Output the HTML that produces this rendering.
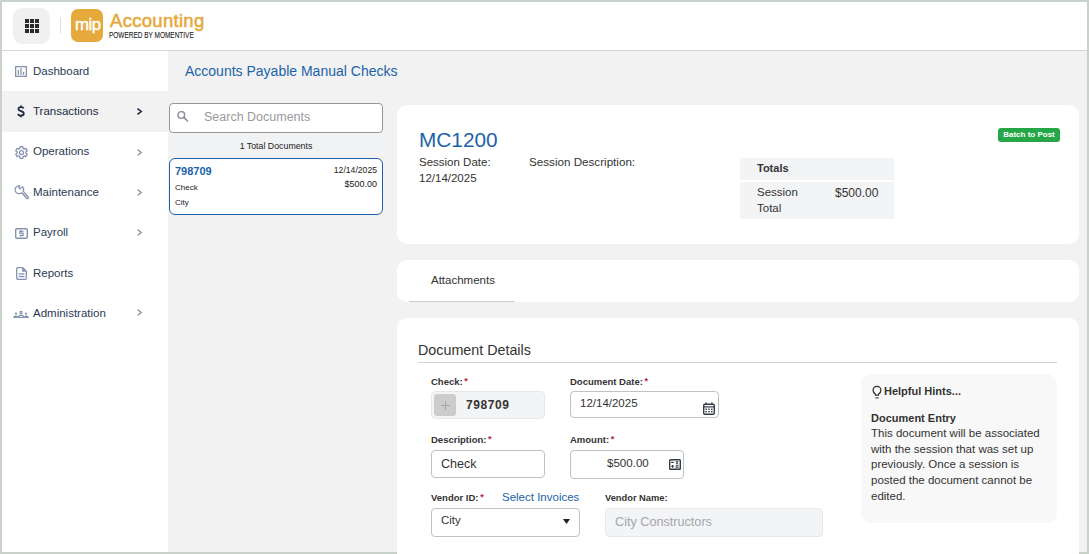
<!DOCTYPE html>
<html><head><meta charset="utf-8">
<style>
*{box-sizing:border-box;margin:0;padding:0}
html,body{width:1089px;height:554px;overflow:hidden;background:#c9d1cb;font-family:"Liberation Sans",sans-serif;position:relative}
.a{position:absolute;white-space:nowrap;line-height:1}
#main{position:absolute;left:2px;top:2px;width:1085px;height:550px;background:#f2f2f2}
#header{position:absolute;left:2px;top:2px;width:1085px;height:49px;background:#fff;border-bottom:1px solid #d6d6d6}
#side{position:absolute;left:2px;top:51px;width:166px;height:501px;background:#fff}
.nav{font-size:11.5px;color:#2b3a55;left:33px}
.chev{position:absolute;width:7px;height:7px}
.card{position:absolute;background:#fff;border-radius:10px}
.lbl{position:absolute;font-size:9.5px;font-weight:bold;color:#333;white-space:nowrap;line-height:1}
.lbl b{color:#b02a3a;font-weight:bold;position:relative;top:-1px;margin-left:-1px;font-size:9px}
.inp{position:absolute;border:1px solid #c2c2c2;border-radius:4px;background:#fff}
.txt{color:#333}
</style></head><body>
<div id="main"></div>
<div id="header"></div>
<div id="side"></div>

<!-- header -->
<div class="a" style="left:13px;top:8px;width:37px;height:36px;border-radius:9px;background:#f0f0f0"></div>
<svg class="a" style="left:25px;top:19px" width="14" height="14" viewBox="0 0 14 14" fill="#2b2b2b">
  <rect x="0" y="0" width="4" height="4"/><rect x="5" y="0" width="4" height="4"/><rect x="10" y="0" width="4" height="4"/>
  <rect x="0" y="5" width="4" height="4"/><rect x="5" y="5" width="4" height="4"/><rect x="10" y="5" width="4" height="4"/>
  <rect x="0" y="10" width="4" height="4"/><rect x="5" y="10" width="4" height="4"/><rect x="10" y="10" width="4" height="4"/>
</svg>
<div class="a" style="left:60px;top:17px;width:1px;height:17px;background:#dfe0e6"></div>
<div class="a" style="left:71px;top:9px;width:32px;height:33px;border-radius:7px;background:#e6a93b"></div>
<div class="a" style="left:75px;top:17px;color:#fff;font-size:16.8px;letter-spacing:-0.5px;-webkit-text-stroke:0.45px #fff">mip</div>
<div class="a" style="left:110px;top:12px;color:#e6a93b;font-size:18.5px;letter-spacing:0.3px;-webkit-text-stroke:0.55px #e6a93b">Accounting</div>
<div class="a" style="left:109px;top:32px;color:#222;font-size:8.2px;transform:scaleX(0.79);transform-origin:0 0;-webkit-text-stroke:0.1px #222">POWERED BY MOMENTIVE</div>

<!-- sidebar -->
<div class="a" style="left:2px;top:91px;width:166px;height:41px;background:#f2f2f2"></div>
<svg class="a" style="left:15px;top:66px" width="12" height="11" viewBox="0 0 12 11"><rect x="0.65" y="0.65" width="10.7" height="9.7" fill="none" stroke="#8591b0" stroke-width="1.3"/><rect x="2.7" y="3.9" width="1.3" height="5" fill="#8591b0"/><rect x="5.3" y="2.1" width="1.3" height="6.8" fill="#8591b0"/><rect x="7.9" y="5.9" width="1.3" height="3" fill="#8591b0"/></svg>
<div class="a nav" style="top:66px">Dashboard</div>

<svg class="a" style="left:17px;top:105px" width="8" height="13" viewBox="0 0 8 13"><path d="M6.6 3.6C6.3 2.6 5.4 2.1 4 2.1C2.5 2.1 1.4 2.8 1.4 4C1.4 5.1 2.4 5.6 4 6.1C5.7 6.6 6.8 7.2 6.8 8.6C6.8 9.9 5.6 10.6 4 10.6C2.4 10.6 1.3 10 1.1 8.8M4 0.4V2.1M4 10.6V12.2" fill="none" stroke="#1d2a44" stroke-width="1.8"/></svg>
<div class="a nav" style="top:106px;color:#1d2a44">Transactions</div>
<svg class="a chev" style="left:136px;top:108px" width="7" height="8" viewBox="0 0 7 8"><path d="M1.2 0.7L5.5 4L1.2 7.3" fill="none" stroke="#1d2a44" stroke-width="1.8"/></svg>

<svg class="a" style="left:15px;top:146px" width="13" height="13" viewBox="0 0 13 13"><path fill="none" stroke="#8591b0" stroke-width="1.25" stroke-linejoin="round" d="M4.89 2.51 L5.05 0.68 L7.95 0.68 L8.11 2.51 L9.15 3.11 L10.82 2.33 L12.27 4.85 L10.76 5.90 L10.76 7.10 L12.27 8.15 L10.82 10.67 L9.15 9.89 L8.11 10.49 L7.95 12.32 L5.05 12.32 L4.89 10.49 L3.85 9.89 L2.18 10.67 L0.73 8.15 L2.24 7.10 L2.24 5.90 L0.73 4.85 L2.18 2.33 L3.85 3.11Z"/><circle cx="6.5" cy="6.5" r="2" fill="none" stroke="#8591b0" stroke-width="1.25"/></svg>
<div class="a nav" style="top:146px">Operations</div>
<svg class="a chev" style="left:136px;top:149px" width="7" height="8" viewBox="0 0 7 8"><path d="M1.3 0.7L5.5 4L1.3 7.3" fill="none" stroke="#7d889c" stroke-width="1.4"/></svg>

<svg class="a" style="left:14px;top:185px" width="15" height="15" viewBox="0 0 15 15"><g fill="none" stroke="#8591b0" stroke-width="1.25" stroke-linejoin="round"><path d="M5.6 0.9A3.9 3.9 0 1 0 7.6 7.6L12.6 13.3A1.1 1.1 0 0 0 14.2 11.8L9.2 6.1A3.9 3.9 0 0 0 8.4 1.6L6.2 3.9L4.8 2.8Z"/><path d="M8.7 8L13 12.4" stroke-width="0.8"/></g></svg>
<div class="a nav" style="top:187px">Maintenance</div>
<svg class="a chev" style="left:136px;top:189px" width="7" height="8" viewBox="0 0 7 8"><path d="M1.3 0.7L5.5 4L1.3 7.3" fill="none" stroke="#7d889c" stroke-width="1.4"/></svg>

<svg class="a" style="left:15px;top:228px" width="13" height="11" viewBox="0 0 13 11"><rect x="0.7" y="0.7" width="11.6" height="9.6" rx="1.2" fill="none" stroke="#8591b0" stroke-width="1.4"/><path d="M8.4 3.3H4.7V5.2H8.1V7.4H4.5M5.9 2.1V3.3M5.9 7.4V8.8" fill="none" stroke="#8591b0" stroke-width="1.2"/></svg>
<div class="a nav" style="top:227px">Payroll</div>
<svg class="a chev" style="left:136px;top:229px" width="7" height="8" viewBox="0 0 7 8"><path d="M1.3 0.7L5.5 4L1.3 7.3" fill="none" stroke="#7d889c" stroke-width="1.4"/></svg>

<svg class="a" style="left:16px;top:267px" width="11" height="13" viewBox="0 0 11 13"><path d="M1.9 0.7H6.8L10.3 4.2V11.1A1.2 1.2 0 0 1 9.1 12.3H1.9A1.2 1.2 0 0 1 0.7 11.1V1.9A1.2 1.2 0 0 1 1.9 0.7Z" fill="none" stroke="#8591b0" stroke-width="1.3"/><path d="M6.2 0.7L10.3 4.8H6.2Z" fill="#8591b0"/><rect x="2.6" y="6.3" width="5.8" height="1.3" fill="#8591b0"/><rect x="2.6" y="8.9" width="5.8" height="1.3" fill="#8591b0"/></svg>
<div class="a nav" style="top:268px">Reports</div>

<svg class="a" style="left:13px;top:311px" width="16" height="7" viewBox="0 0 16 7"><g fill="none" stroke="#8591b0" stroke-width="1.1"><circle cx="8" cy="1.5" r="1.1"/><path d="M5.3 6.4C5.4 4.8 6.5 4.1 8 4.1C9.5 4.1 10.6 4.8 10.7 6.4Z"/></g><g fill="#8591b0"><circle cx="3" cy="2.6" r="1.1"/><circle cx="13" cy="2.6" r="1.1"/><path d="M0.2 7C0.3 5.2 1.4 4.6 3 4.6C3.8 4.6 4.3 4.8 4.6 5L4.6 7Z"/><path d="M15.8 7C15.7 5.2 14.6 4.6 13 4.6C12.2 4.6 11.7 4.8 11.4 5L11.4 7Z"/><rect x="4.5" y="6" width="7" height="1"/></g></svg>
<div class="a nav" style="top:308px">Administration</div>
<svg class="a chev" style="left:136px;top:309px" width="7" height="8" viewBox="0 0 7 8"><path d="M1.3 0.7L5.5 4L1.3 7.3" fill="none" stroke="#7d889c" stroke-width="1.4"/></svg>

<!-- page title & doc list -->
<div class="a" style="left:185px;top:64px;font-size:14px;color:#1b63a8">Accounts Payable Manual Checks</div>

<div class="a" style="left:169px;top:103px;width:214px;height:30px;border:1px solid #94979c;border-radius:4px;background:#fff"></div>
<svg class="a" style="left:177px;top:111px" width="12" height="11" viewBox="0 0 12 11"><circle cx="4.3" cy="3.9" r="3.3" fill="none" stroke="#8c9098" stroke-width="1.5"/><path d="M6.8 6.4L10.5 10" stroke="#8c9098" stroke-width="1.7" stroke-linecap="round"/></svg>
<div class="a" style="left:204px;top:111px;font-size:12.5px;color:#9b9b9b">Search Documents</div>

<div class="a" style="left:168px;top:133px;width:215px;height:21px;background:#f1f2f4;border-radius:4px"></div>
<div class="a" style="left:168.5px;top:142px;width:215px;text-align:center;font-size:8.8px;color:#222">1 Total Documents</div>

<div class="a" style="left:169px;top:158px;width:214px;height:57px;border:1.4px solid #1c5fab;border-radius:6px;background:#fff"></div>
<div class="a" style="left:175px;top:166px;font-size:11px;font-weight:bold;color:#1b63a8">798709</div>
<div class="a" style="left:300px;width:77px;text-align:right;top:166px;font-size:8.65px;color:#222">12/14/2025</div>
<div class="a" style="left:300px;width:77px;text-align:right;top:180px;font-size:9px;color:#222">$500.00</div>
<div class="a" style="left:175px;top:184px;font-size:8px;color:#222">Check</div>
<div class="a" style="left:175px;top:199px;font-size:8px;color:#222">City</div>

<!-- top card -->
<div class="card" style="left:397px;top:105px;width:682px;height:139px"></div>
<div class="a" style="left:419px;top:130px;font-size:20.8px;color:#1b63a8">MC1200</div>
<div class="a txt" style="left:419px;top:157px;font-size:11.5px">Session Date:</div>
<div class="a txt" style="left:419px;top:173px;font-size:11.5px">12/14/2025</div>
<div class="a txt" style="left:529px;top:156px;font-size:11.65px">Session Description:</div>
<div class="a" style="left:740px;top:158px;width:154px;height:22px;background:#f3f4f6"></div>
<div class="a" style="left:740px;top:182px;width:154px;height:37px;background:#f3f4f6"></div>
<div class="a txt" style="left:757px;top:163px;font-size:11px;font-weight:bold">Totals</div>
<div class="a txt" style="left:757px;top:187px;font-size:11.5px">Session</div>
<div class="a txt" style="left:757px;top:203px;font-size:11.5px">Total</div>
<div class="a txt" style="left:835px;top:187px;font-size:12px">$500.00</div>
<div class="a" style="left:998px;top:128px;width:62px;height:14px;border-radius:3px;background:#25a748"></div>
<div class="a" style="left:998px;top:131px;width:62px;text-align:center;color:#fff;font-size:8px;font-weight:bold">Batch to Post</div>

<!-- attachments card -->
<div class="card" style="left:397px;top:260px;width:682px;height:42px"></div>
<div class="a txt" style="left:431px;top:275px;font-size:11.5px">Attachments</div>
<div class="a" style="left:409px;top:301px;width:106px;height:1px;background:#c9ccd2"></div>

<!-- details card -->
<div class="card" style="left:397px;top:318px;width:682px;height:260px"></div>
<div class="a txt" style="left:418px;top:343px;font-size:14.3px">Document Details</div>
<div class="a" style="left:418px;top:362px;width:639px;height:1px;background:#d2d2d2"></div>

<div class="lbl" style="left:431px;top:377px">Check: <b>*</b></div>
<div class="a" style="left:431px;top:391px;width:114px;height:28px;background:#f3f4f6;border:1px solid #e7e8ea;border-radius:4px"></div>
<div class="a" style="left:434px;top:394px;width:22px;height:22px;background:#cccccc;border-radius:3px"></div>
<svg class="a" style="left:441px;top:401px" width="9" height="9" viewBox="0 0 9 9"><path d="M4.5 0V9M0 4.5H9" stroke="#a9a9a9" stroke-width="1"/></svg>
<div class="a txt" style="left:466px;top:399px;font-size:12px;font-weight:bold;letter-spacing:0.6px">798709</div>

<div class="lbl" style="left:570px;top:377px">Document Date: <b>*</b></div>
<div class="inp" style="left:570px;top:391px;width:149px;height:27px"></div>
<div class="a txt" style="left:580px;top:398px;font-size:11.5px">12/14/2025</div>
<svg class="a" style="left:703px;top:402px" width="12" height="13" viewBox="0 0 12 13"><rect x="0.7" y="2.3" width="10.6" height="10" rx="1.2" fill="none" stroke="#333b45" stroke-width="1.4"/><path d="M0.8 4.9H11.2" stroke="#333b45" stroke-width="1.2"/><path d="M3.1 0.4V2.6M8.9 0.4V2.6" stroke="#333b45" stroke-width="1.4"/><g fill="#333b45"><rect x="2.4" y="6.6" width="1.6" height="1.3"/><rect x="5.2" y="6.6" width="1.6" height="1.3"/><rect x="8" y="6.6" width="1.6" height="1.3"/><rect x="2.4" y="9" width="1.6" height="1.3"/><rect x="5.2" y="9" width="1.6" height="1.3"/><rect x="8" y="9" width="1.6" height="1.3"/></g></svg>

<div class="lbl" style="left:431px;top:435px">Description: <b>*</b></div>
<div class="inp" style="left:431px;top:450px;width:114px;height:28px"></div>
<div class="a txt" style="left:441px;top:458px;font-size:12.5px">Check</div>

<div class="lbl" style="left:570px;top:435px">Amount: <b>*</b></div>
<div class="inp" style="left:570px;top:450px;width:114px;height:29px"></div>
<div class="a txt" style="left:607px;top:458px;font-size:11.55px">$500.00</div>
<svg class="a" style="left:669px;top:459px" width="12" height="11" viewBox="0 0 12 11"><rect x="0.7" y="0.7" width="10.6" height="9.6" rx="0.8" fill="none" stroke="#333b45" stroke-width="1.4"/><g stroke="#333b45" stroke-width="1.1" fill="none"><path d="M2.2 3.4H4.8M6.9 2.3L9.1 4.5M9.1 2.3L6.9 4.5M2.2 7.3H5M3.6 5.9V8.7M6.6 6.3H9.6M6.6 8.1H9.6"/></g></svg>

<div class="lbl" style="left:431px;top:493px">Vendor ID: <b>*</b></div>
<div class="a" style="left:502px;top:492px;font-size:11.5px;color:#1b63a8">Select Invoices</div>
<div class="inp" style="left:431px;top:508px;width:149px;height:29px"></div>
<div class="a txt" style="left:441px;top:515px;font-size:11.5px">City</div>
<svg class="a" style="left:563px;top:519px" width="7" height="5" viewBox="0 0 7 5"><path d="M0 0H7L3.5 5Z" fill="#222"/></svg>

<div class="lbl" style="left:605px;top:494px;font-size:9.3px">Vendor Name:</div>
<div class="a" style="left:605px;top:508px;width:218px;height:29px;background:#f3f4f6;border:1px solid #e6e8eb;border-radius:4px"></div>
<div class="a" style="left:615px;top:516px;font-size:12.65px;color:#a3a6ab">City Constructors</div>

<div class="a" style="left:861px;top:374px;width:196px;height:149px;background:#f8f8f8;border-radius:10px"></div>
<svg class="a" style="left:872px;top:385px" width="10" height="14" viewBox="0 0 10 14"><path d="M3.4 10V9C2 8.2 1.1 6.9 1.1 5.3A3.9 3.9 0 0 1 8.9 5.3C8.9 6.9 8 8.2 6.6 9V10Z" fill="none" stroke="#2d2d2d" stroke-width="1.25" stroke-linejoin="round"/><rect x="3.2" y="12.3" width="3.6" height="1.2" fill="#555"/></svg>
<div class="a txt" style="left:884px;top:386px;font-size:11px;font-weight:bold">Helpful Hints...</div>
<div class="a txt" style="left:871px;top:413px;font-size:11px;font-weight:bold">Document Entry</div>
<div class="a txt" style="left:871px;top:426px;width:182px;font-size:11.5px;line-height:15.65px;white-space:normal">This document will be associated with the session that was set up previously. Once a session is posted the document cannot be edited.</div>

</body></html>
